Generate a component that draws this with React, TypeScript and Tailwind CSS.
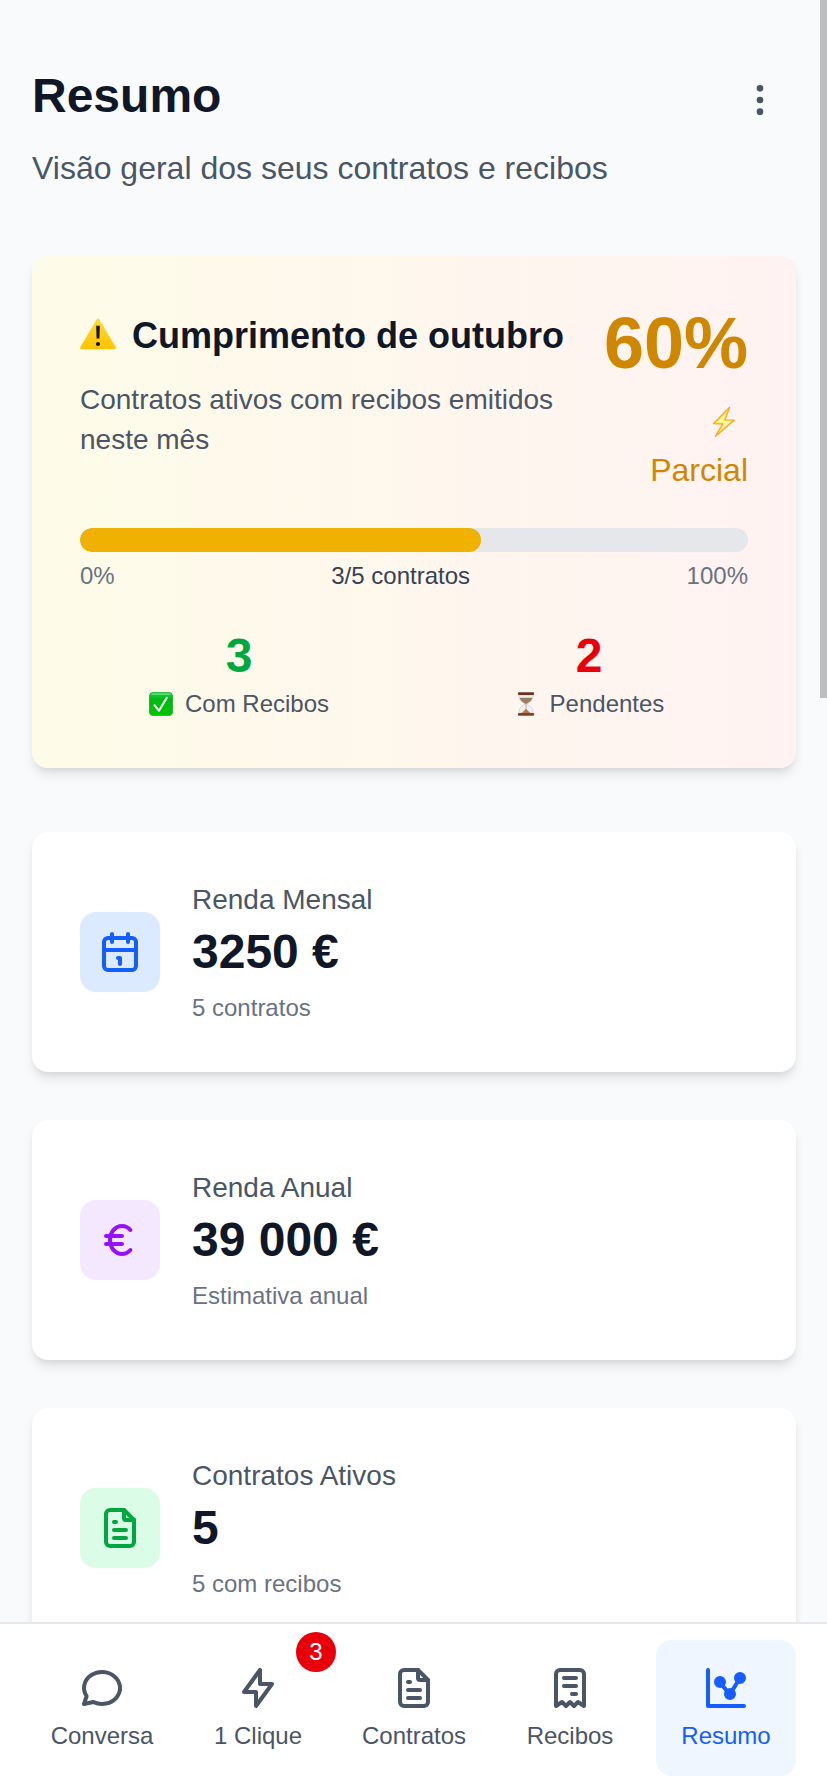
import type { ReactNode } from 'react';

function Icon({ children, className = 'size-12' }: { children: ReactNode; className?: string }) {
  return (
    <svg viewBox="0 0 24 24" fill="none" stroke="currentColor" strokeWidth={2} strokeLinecap="round" strokeLinejoin="round" className={`${className} block shrink-0`} aria-hidden="true">
      {children}
    </svg>
  );
}

const CalendarIcon = () => (
  <Icon>
    <path d="M4 7a2 2 0 0 1 2-2h12a2 2 0 0 1 2 2v12a2 2 0 0 1-2 2H6a2 2 0 0 1-2-2zM16 3v4M8 3v4M4 11h16M11 15h1M12 15v3" />
  </Icon>
);
const EuroIcon = () => (
  <Icon>
    <path d="M17.2 7a6 7 0 1 0 0 10M13 10H5m0 4h8" />
  </Icon>
);
const FileIcon = () => (
  <Icon>
    <path d="M14 3v4a1 1 0 0 0 1 1h4" />
    <path d="M17 21H7a2 2 0 0 1-2-2V5a2 2 0 0 1 2-2h7l5 5v11a2 2 0 0 1-2 2zM9 9h1M9 13h6M9 17h6" />
  </Icon>
);
const ChatIcon = () => (
  <Icon>
    <path d="M3 20l1.3-3.9c-2.324-3.437-1.426-7.872 2.1-10.374c3.526-2.501 8.59-2.296 11.845.48c3.255 2.777 3.695 7.266 1.029 10.501c-2.666 3.235-7.615 4.215-11.574 2.293l-4.7 1" />
  </Icon>
);
const BoltIcon = () => (
  <Icon>
    <path d="M13 3v7h6l-8 11v-7H5l8-11" />
  </Icon>
);
const ReceiptIcon = () => (
  <Icon>
    <path d="M5 21V5a2 2 0 0 1 2-2h10a2 2 0 0 1 2 2v16l-3-2l-2 2l-2-2l-2 2l-2-2l-3 2M9 7h6M9 11h6M13 15h2" />
  </Icon>
);
const ChartIcon = () => (
  <Icon>
    <path d="M3 3v18h18M10.16 10.62l2.34 2.88M15.088 13.328l2.837-4.586" />
    <circle cx="9" cy="9" r="2" fill="currentColor" />
    <circle cx="19" cy="7" r="2" fill="currentColor" />
    <circle cx="14" cy="15" r="2" fill="currentColor" />
  </Icon>
);

function WarningEmoji() {
  return (
    <svg viewBox="0 0 36 32" className="mb-1 h-8 w-9 shrink-0" aria-hidden="true">
      <defs>
        <linearGradient id="warn" x1="0" y1="0" x2="0" y2="1">
          <stop offset="0" stopColor="#ffda35" />
          <stop offset="1" stopColor="#ffc400" />
        </linearGradient>
      </defs>
      <path d="M16.6 1.4q1.4-2 2.8 0L35.6 29q1 2.2-1.4 2.2H1.8Q-.6 31.200.4 29z" fill="url(#warn)" />
      <path d="M16.200 7.800h3.600l-.4 12.700h-2.800z" fill="#111" />
      <circle cx="18" cy="26" r="2.100" fill="#111" />
    </svg>
  );
}

function LightningEmoji() {
  return (
    <svg viewBox="0 0 24 32" className="h-8 w-6" aria-hidden="true">
      <path d="M17.600 1.200L1.400 17.700l9.300.3L3.300 30.400L22.200 14.200l-9.200-.3z" fill="#fff04f" stroke="#fba52b" strokeWidth="1.300" strokeLinejoin="round" />
      <path d="M14.800 6L5.500 16.300l8 .3L8.500 24L18.500 15.400l-8-.4z" fill="#fffbd0" />
    </svg>
  );
}

function CheckEmoji() {
  return (
    <svg viewBox="0 0 24 24" className="size-6 shrink-0" aria-hidden="true">
      <defs>
        <linearGradient id="check" x1="0" y1="0" x2="0" y2="1">
          <stop offset="0" stopColor="#1fd04a" />
          <stop offset="0.300" stopColor="#00ba14" />
          <stop offset="1" stopColor="#00c400" />
        </linearGradient>
      </defs>
      <rect x="0.400" y="0.400" width="23.200" height="23.200" rx="3.800" fill="url(#check)" stroke="#13a82d" strokeWidth="0.800" />
      <path d="M3 2.200h18" stroke="#6fe886" strokeWidth="1.300" strokeLinecap="round" />
      <path d="M5.500 13.200l4.500 5.600L17.800 5.800" fill="none" stroke="#fff" strokeWidth="2" strokeLinecap="round" strokeLinejoin="round" />
    </svg>
  );
}

function HourglassEmoji() {
  return (
    <svg viewBox="0 0 24 24" className="size-6 shrink-0" aria-hidden="true">
      <path d="M5 3c0 4.800 1.500 6.200 5.800 8.700v.8C6.500 14.500 5 17 5 21h14c0-4-1.500-6.500-5.800-8.500v-.8C17.500 9.200 19 7.800 19 3z" fill="#edf0f4" stroke="#c3c7ce" strokeWidth="0.600" />
      <path d="M5.700 5.800h12.600c-.5 2.700-2.300 3.900-5.600 5.900h-1.400c-3.300-2-5.100-3.200-5.600-5.900z" fill="#9c7d5d" />
      <path d="M11.700 11h.6v6l3.900 4H7.800l3.900-4z" fill="#b77c45" />
      <rect x="3.800" y="0.200" width="16.400" height="2.800" rx="1.300" fill="#6b3420" />
      <rect x="3.800" y="21" width="16.400" height="2.800" rx="1.300" fill="#7b452c" />
    </svg>
  );
}

interface StatProps {
  label: string;
  value: string;
  note: string;
  tile: string;
  icon: ReactNode;
}

function StatCard({ label, value, note, tile, icon }: StatProps) {
  return (
    <section className="flex h-60 shrink-0 items-center gap-8 rounded-2xl bg-white px-12 shadow-[0_8px_12px_-2px_rgba(0,0,0,0.1),0_4px_8px_-4px_rgba(0,0,0,0.1)]">
      <div className={`flex size-20 shrink-0 items-center justify-center rounded-2xl ${tile}`}>{icon}</div>
      <div>
        <p className="text-[28px] leading-10 text-gray-600">{label}</p>
        <p className="text-5xl leading-[64px] font-bold text-gray-900">{value}</p>
        <p className="mt-2 text-2xl leading-8 text-gray-500">{note}</p>
      </div>
    </section>
  );
}

const stats: StatProps[] = [
  { label: 'Renda Mensal', value: '3250 €', note: '5 contratos', tile: 'bg-blue-100 text-blue-600', icon: <CalendarIcon /> },
  { label: 'Renda Anual', value: '39 000 €', note: 'Estimativa anual', tile: 'bg-purple-100 text-purple-600', icon: <EuroIcon /> },
  { label: 'Contratos Ativos', value: '5', note: '5 com recibos', tile: 'bg-green-100 text-green-600', icon: <FileIcon /> },
];

const tabs = [
  { label: 'Conversa', icon: <ChatIcon /> },
  { label: '1 Clique', icon: <BoltIcon />, badge: 3 },
  { label: 'Contratos', icon: <FileIcon /> },
  { label: 'Recibos', icon: <ReceiptIcon /> },
  { label: 'Resumo', icon: <ChartIcon />, active: true },
];

export default function App() {
  return (
    <div className="relative flex h-[1792px] w-full flex-col overflow-hidden bg-[#f9fafc] font-['Liberation_Sans',Arial,sans-serif]">
      <main className="flex min-h-0 flex-1 flex-col overflow-hidden pt-16 pr-[31px] pl-8">
        <header className="flex h-32 shrink-0 items-start justify-between">
          <div>
            <h1 className="text-5xl leading-[64px] font-bold text-gray-900">Resumo</h1>
            <p className="mt-4 text-[32px] leading-[48px] text-gray-600">Visão geral dos seus contratos e recibos</p>
          </div>
          <button className="mt-4 mr-4 text-gray-600" aria-label="Menu">
            <Icon className="size-10">
              <circle cx="12" cy="5" r="1" />
              <circle cx="12" cy="12" r="1" />
              <circle cx="12" cy="19" r="1" />
            </Icon>
          </button>
        </header>

        <section className="mt-16 h-[512px] shrink-0 rounded-2xl bg-linear-to-r from-yellow-50 to-red-50 p-12 shadow-[0_8px_12px_-2px_rgba(0,0,0,0.1),0_4px_8px_-4px_rgba(0,0,0,0.1)]">
          <div className="flex h-[192px] justify-between">
            <div className="w-[500px] pt-1">
              <h2 className="flex h-14 items-center gap-4 text-4xl font-bold whitespace-nowrap text-gray-900">
                <WarningEmoji />
                Cumprimento de outubro
              </h2>
              <p className="mt-4 text-[28px] leading-10 text-gray-600">Contratos ativos com recibos emitidos neste mês</p>
            </div>
            <div className="flex flex-col items-end pt-[3px] text-yellow-600">
              <span className="text-7xl leading-[72px] font-bold">60%</span>
              <span className="mt-[19px] flex h-12 items-center pr-3">
                <LightningEmoji />
              </span>
              <span className="text-[32px] leading-[48px]">Parcial</span>
            </div>
          </div>
          <div className="mt-8 h-6 overflow-hidden rounded-full bg-gray-200">
            <div className="h-full w-3/5 rounded-full bg-yellow-500" />
          </div>
          <div className="mt-2 flex justify-between text-2xl leading-8 text-gray-500">
            <span>0%</span>
            <span className="text-gray-700">3/5 contratos</span>
            <span>100%</span>
          </div>
          <div className="mt-8 grid grid-cols-2 gap-8 text-center">
            <div>
              <p className="text-5xl leading-[64px] font-bold text-green-600">3</p>
              <p className="flex items-center justify-center gap-3 text-2xl leading-8 text-gray-600">
                <CheckEmoji />
                Com Recibos
              </p>
            </div>
            <div>
              <p className="text-5xl leading-[64px] font-bold text-red-600">2</p>
              <p className="flex items-center justify-center gap-3 text-2xl leading-8 text-gray-600">
                <HourglassEmoji />
                Pendentes
              </p>
            </div>
          </div>
        </section>

        <div className="mt-16 flex flex-col gap-12">
          {stats.map((stat) => (
            <StatCard key={stat.label} {...stat} />
          ))}
        </div>
      </main>

      <nav className="z-10 grid h-[170px] shrink-0 grid-cols-5 gap-4 border-t-2 border-gray-200 bg-white pt-4 pr-[31px] pb-4 pl-8">
        {tabs.map((tab) => (
          <button
            key={tab.label}
            className={`relative flex h-[136px] flex-col items-center gap-2 rounded-2xl pt-6 ${tab.active ? 'bg-blue-50 text-blue-600' : 'text-gray-600'}`}
          >
            {tab.icon}
            <span className="text-2xl leading-8">{tab.label}</span>
            {tab.badge && (
              <span className="absolute -top-2 -right-2 flex size-10 items-center justify-center rounded-full bg-red-600 text-2xl text-white">{tab.badge}</span>
            )}
          </button>
        ))}
      </nav>

      <div className="absolute top-0 right-0 h-[698px] w-[7px] bg-[#bdbec0]" />
    </div>
  );
}
